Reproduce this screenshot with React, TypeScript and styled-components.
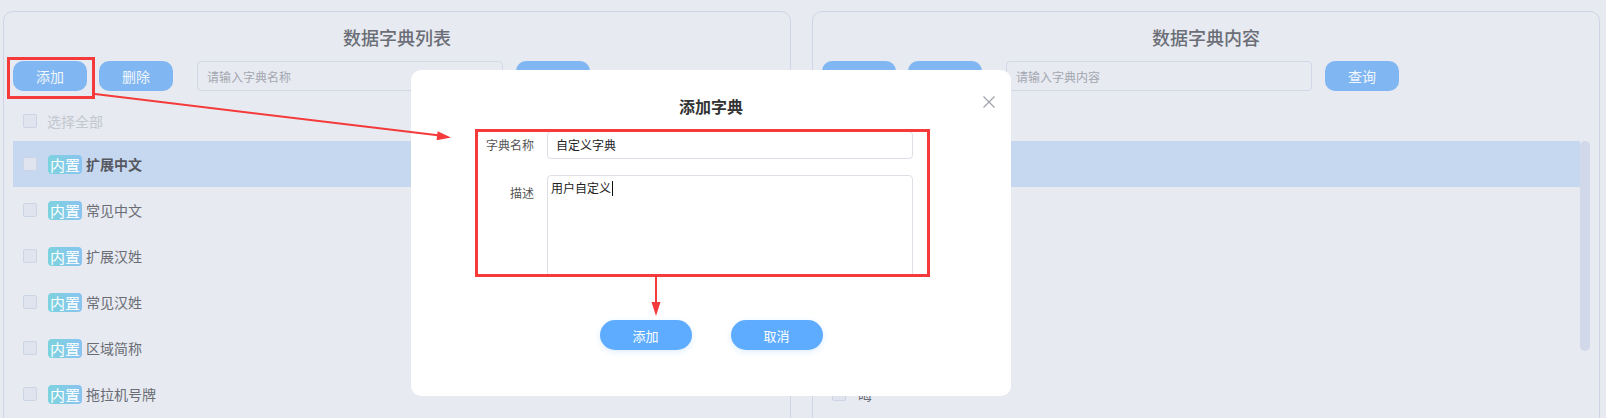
import React from "react";
import styled, { createGlobalStyle } from "styled-components";

const GlobalStyle = createGlobalStyle`
  html, body { margin: 0; padding: 0; background: #e7eaf0; overflow: hidden; }
  body { font-family: "Noto Sans CJK SC", "Noto Sans", sans-serif; }
  * { box-sizing: border-box; }
`;

const Page = styled.div`
  position: relative;
  width: 1606px;
  height: 418px;
  overflow: hidden;
  display: flex;
  gap: 21px;
  padding: 11px 6px 0 3px;
`;

const Panel = styled.section`
  flex: 1;
  height: 450px;
  border: 1px solid #cfd5e6;
  border-radius: 10px;
  padding: 0 9px;
  display: flex;
  flex-direction: column;
`;

const PanelTitle = styled.h2`
  margin: 0;
  height: 49px;
  line-height: 50px;
  text-align: center;
  font-size: 18px;
  font-weight: 500;
  color: #6b6e77;
`;

const Toolbar = styled.div`
  display: flex;
  align-items: center;
  gap: 12px;
  height: 30px;
`;

const ToolButton = styled.button`
  width: 74px;
  height: 30px;
  border: none;
  border-radius: 10px;
  background: #80b6f1;
  color: #f2f7fd;
  font-family: inherit;
  font-size: 14px;
  padding: 0;
`;

const SearchInput = styled.input`
  margin: 0 1px 0 12px;
  width: 306px;
  height: 30px;
  border: 1px solid #d3d8e8;
  border-radius: 4px;
  background: transparent;
  padding: 0 9px;
  font-family: inherit;
  font-size: 12px;
  color: #333;
  outline: none;
  &::placeholder { color: #a3a7b0; }
`;

const SelectAllRow = styled.div`
  height: 50px;
  padding: 10px 0 0 10px;
  display: flex;
  align-items: center;
  gap: 10px;
  font-size: 14px;
  color: #c3c7cf;
`;

const Checkbox = styled.span`
  flex: none;
  width: 14px;
  height: 14px;
  border: 1px solid #cdd4e4;
  background: #dfe4ee;
  border-radius: 2px;
`;

const ListArea = styled.div`
  display: flex;
  align-items: flex-start;
`;

const List = styled.ul`
  flex: 1;
  margin: 0;
  padding: 0;
  list-style: none;
`;

const Row = styled.li<{ $selected?: boolean }>`
  height: 46px;
  padding-left: 10px;
  display: flex;
  align-items: center;
  background: ${(p) => (p.$selected ? "#c6d8f0" : "transparent")};
`;

const Tag = styled.span`
  margin-left: 11px;
  width: 34px;
  height: 19px;
  border-radius: 4px;
  background: linear-gradient(90deg, #7dd2de, #89c4f0);
  color: #fff;
  font-size: 15px;
  line-height: 19px;
  text-align: center;
`;

const RowText = styled.span<{ $selected?: boolean; $gap: number }>`
  margin-left: ${(p) => p.$gap}px;
  font-size: 14px;
  color: ${(p) => (p.$selected ? "#555861" : "#6a6d75")};
  font-weight: ${(p) => (p.$selected ? 600 : 400)};
`;

const Scrollbar = styled.div`
  flex: none;
  width: 10px;
  height: 210px;
  border-radius: 5px;
  background: #d1d8ea;
`;

const Modal = styled.div`
  position: absolute;
  left: 411px;
  top: 70px;
  width: 600px;
  height: 326px;
  background: #fff;
  border-radius: 10px;
  padding-top: 26px;
`;

const ModalTitle = styled.h3`
  margin: 0;
  text-align: center;
  font-size: 16px;
  line-height: 20px;
  font-weight: 700;
  color: #333;
`;

const CloseBtn = styled.span`
  position: absolute;
  left: 572px;
  top: 19px;
  width: 12px;
  height: 12px;
  display: block;
`;

const Form = styled.div`
  margin-top: 15px;
  padding-left: 64px;
  display: flex;
  flex-direction: column;
  gap: 16px;
`;

const FormItem = styled.div`
  display: flex;
  align-items: flex-start;
  gap: 13px;
`;

const FormLabel = styled.label<{ $offset?: number }>`
  width: 59px;
  text-align: right;
  font-size: 12px;
  line-height: 28px;
  color: #555;
  padding-top: ${(p) => p.$offset ?? 0}px;
`;

const TextInput = styled.div`
  width: 366px;
  height: 28px;
  border: 1px solid #dcdfe6;
  border-radius: 4px;
  padding: 0 8px;
  font-size: 12px;
  line-height: 26px;
  color: #222;
`;

const TextArea = styled.div`
  width: 366px;
  height: 102px;
  border: 1px solid #dcdfe6;
  border-radius: 4px;
  padding: 4px 3px;
  font-size: 12px;
  line-height: 16px;
  color: #222;
`;

const Caret = styled.span`
  display: inline-block;
  width: 1px;
  height: 15px;
  background: #111;
  vertical-align: -3px;
  margin-left: 1px;
`;

const ModalActions = styled.div`
  margin-top: 43px;
  display: flex;
  justify-content: center;
  gap: 39px;
`;

const ModalButton = styled.button`
  width: 92px;
  height: 30px;
  border: none;
  border-radius: 15px;
  background: #5eacff;
  color: #fff;
  font-family: inherit;
  font-size: 13px;
  padding: 0;
  box-shadow: 0 2px 6px rgba(94, 172, 255, 0.2);
`;

const Annotations = styled.svg`
  position: absolute;
  left: 0;
  top: 0;
  pointer-events: none;
`;

const leftItems = ["扩展中文", "常见中文", "扩展汉姓", "常见汉姓", "区域简称", "拖拉机号牌"];
const rightItems = ["一", "二", "三", "四", "五", "晦"];

export default function App() {
  return (
    <>
      <GlobalStyle />
      <Page>
        <Panel>
          <PanelTitle>数据字典列表</PanelTitle>
          <Toolbar>
            <ToolButton>添加</ToolButton>
            <ToolButton>删除</ToolButton>
            <SearchInput placeholder="请输入字典名称" readOnly />
            <ToolButton>查询</ToolButton>
          </Toolbar>
          <SelectAllRow>
            <Checkbox />
            选择全部
          </SelectAllRow>
          <ListArea>
            <List>
              {leftItems.map((t, i) => (
                <Row key={t} $selected={i === 0}>
                  <Checkbox />
                  <Tag>内置</Tag>
                  <RowText $gap={4} $selected={i === 0}>{t}</RowText>
                </Row>
              ))}
            </List>
            <Scrollbar />
          </ListArea>
        </Panel>
        <Panel>
          <PanelTitle>数据字典内容</PanelTitle>
          <Toolbar>
            <ToolButton>添加</ToolButton>
            <ToolButton>删除</ToolButton>
            <SearchInput placeholder="请输入字典内容" readOnly />
            <ToolButton>查询</ToolButton>
          </Toolbar>
          <SelectAllRow>
            <Checkbox />
            选择全部
          </SelectAllRow>
          <ListArea>
            <List>
              {rightItems.map((t, i) => (
                <Row key={t} $selected={i === 0}>
                  <Checkbox />
                  <RowText $gap={12} $selected={i === 0}>{t}</RowText>
                </Row>
              ))}
            </List>
            <Scrollbar />
          </ListArea>
        </Panel>

        <Modal>
          <ModalTitle>添加字典</ModalTitle>
          <CloseBtn>
            <svg width="12" height="12" viewBox="0 0 12 12">
              <path d="M0.5 0.5 L11.5 11.5 M11.5 0.5 L0.5 11.5" stroke="#9fa3ab" strokeWidth="1.2" fill="none" />
            </svg>
          </CloseBtn>
          <Form>
            <FormItem>
              <FormLabel>字典名称</FormLabel>
              <TextInput>自定义字典</TextInput>
            </FormItem>
            <FormItem>
              <FormLabel $offset={4}>描述</FormLabel>
              <TextArea>
                用户自定义<Caret />
              </TextArea>
            </FormItem>
          </Form>
          <ModalActions>
            <ModalButton>添加</ModalButton>
            <ModalButton>取消</ModalButton>
          </ModalActions>
        </Modal>

        <Annotations width="1606" height="418" viewBox="0 0 1606 418">
          <rect x="8.5" y="58.5" width="85" height="39" fill="none" stroke="#f43a3a" strokeWidth="3" />
          <rect x="476.5" y="130.5" width="452" height="145" fill="none" stroke="#f43a3a" strokeWidth="3" />
          <line x1="95" y1="94" x2="440" y2="135.6" stroke="#f43a3a" strokeWidth="2" />
          <polygon points="451,137.5 437.6,131.3 436.6,140.3" fill="#f43a3a" />
          <line x1="656" y1="277" x2="656" y2="303" stroke="#f43a3a" strokeWidth="2" />
          <polygon points="656,316 651.5,302 660.5,302" fill="#f43a3a" />
        </Annotations>
      </Page>
    </>
  );
}
